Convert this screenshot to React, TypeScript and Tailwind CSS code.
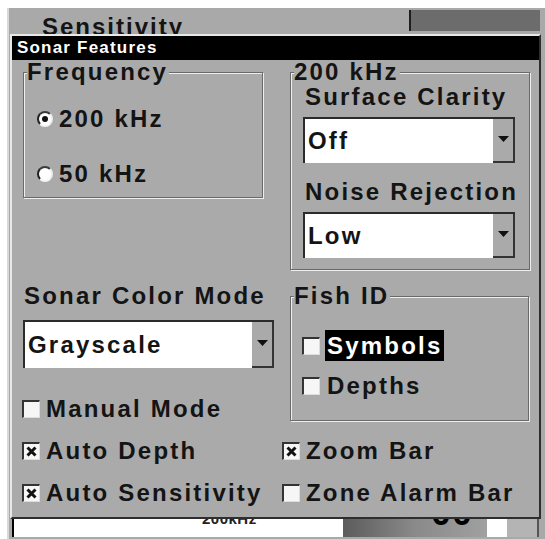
import React from "react";

const TXT = "text-[24px] leading-[24px] font-bold tracking-[2.2px] text-[#141414] whitespace-nowrap";

function GroupLabel({ children }: { children: React.ReactNode }) {
  return (
    <div className={`-mt-[13px] ml-[3px] w-fit bg-[#aaaaaa] pr-[1px] ${TXT}`}>{children}</div>
  );
}

function Dropdown({ value, cls }: { value: string; cls: string }) {
  return (
    <div className={`flex border-t-2 border-l-2 border-[#2b2b2b] ${cls}`}>
      <div className={`flex-1 bg-white flex items-center pl-[3px] ${TXT}`}>{value}</div>
      <div className="w-[22px] bg-[#aaaaaa] border-r-2 border-b-2 border-[#333] flex items-center justify-center pb-[3px]">
        <svg width="11" height="6" viewBox="0 0 11 6">
          <path d="M0 0H11L5.5 6Z" fill="#111" />
        </svg>
      </div>
    </div>
  );
}

function Radio({ on }: { on?: boolean }) {
  return (
    <div className="w-[16px] h-[16px] rounded-full bg-white border-2 border-t-[#3a3a3a] border-l-[#222] border-r-[#eeeeee] border-b-[#f4f4f4] flex items-center justify-center shrink-0">
      {on ? <div className="w-[6px] h-[6px] rounded-full bg-[#111]" /> : null}
    </div>
  );
}

function Check({ on }: { on?: boolean }) {
  return (
    <div className="w-[18px] h-[18px] bg-[#f6f6f6] border-t-2 border-l-2 border-t-[#333] border-l-[#333] border-r border-b border-r-[#dddddd] border-b-[#dddddd] flex items-center justify-center shrink-0">
      {on ? (
        <svg width="13" height="13" viewBox="0 0 13 13">
          <path d="M2.5 2.5L10.5 10.5M10.5 2.5L2.5 10.5" stroke="#111" strokeWidth="3" />
        </svg>
      ) : null}
    </div>
  );
}

function CheckRow({ label, on, cls }: { label: string; on?: boolean; cls: string }) {
  return (
    <div className={`flex items-center ${cls}`}>
      <Check on={on} />
      <span className={`ml-[6px] ${TXT}`}>{label}</span>
    </div>
  );
}

const BOX =
  "border border-[#6a6a6a] shadow-[inset_1px_1px_0_#eeeeee,1px_1px_0_#eeeeee]";

export default function App() {
  return (
    <div className="w-[545px] h-[539px] bg-white overflow-hidden font-['Liberation_Sans',Arial,sans-serif]">
      <div className="ml-[7px] mt-[8px] w-[538px] h-[531px] bg-[#a9a9a9] border-l-2 border-[#d8d8d8] flex flex-col">
        {/* top bar behind dialog */}
        <div className="h-[26px] flex overflow-hidden shrink-0">
          <div className={`w-[400px] pl-[33px] pt-[7px] ${TXT} tracking-[2px]`}>Sensitivity</div>
          <div className="mt-[2px] h-[21px] w-[131px] bg-[#6c6c6c] border-l-2 border-[#1e1e1e]" />
        </div>

        {/* dialog */}
        <div className="ml-[1px] w-[531px] h-[485px] shrink-0 bg-[#aaaaaa] border-t-2 border-l-2 border-t-[#e8e8e8] border-l-[#e8e8e8] border-r-2 border-b-2 border-r-[#2e2e2e] border-b-[#2e2e2e] flex flex-col">
          <div className="h-[24px] bg-black pl-[5px] text-white text-[17px] leading-[24px] font-bold tracking-[1.2px]">
            Sonar Features
          </div>

          <div className="pl-[11px] pt-[12px]">
            <div className="flex">
              {/* left column */}
              <div className="w-[251px] flex flex-col">
                <div className={`w-[240px] ${BOX} pb-[11px]`}>
                  <GroupLabel>Frequency</GroupLabel>
                  <div className="pl-[13px]">
                    <div className="mt-[23px] flex items-center">
                      <Radio on />
                      <span className={`ml-[6px] ${TXT}`}>200 kHz</span>
                    </div>
                    <div className="mt-[31px] flex items-center">
                      <Radio />
                      <span className={`ml-[6px] ${TXT}`}>50 kHz</span>
                    </div>
                  </div>
                </div>

                <div className={`mt-[86px] ml-[1px] ${TXT}`}>Sonar Color Mode</div>
                <Dropdown value="Grayscale" cls="mt-[12px] w-[251px] h-[48px]" />
                <CheckRow label="Manual Mode" cls="mt-[29px] -ml-[1px]" />
              </div>

              {/* right column */}
              <div className="ml-[16px] w-[240px] flex flex-col">
                <div className={`w-[240px] ${BOX} pb-[11px]`}>
                  <GroupLabel>200 kHz</GroupLabel>
                  <div className="pl-[12px]">
                    <div className={`mt-[1px] ml-[2px] ${TXT}`}>Surface Clarity</div>
                    <Dropdown value="Off" cls="mt-[8px] w-[212px] h-[46px]" />
                    <div className={`mt-[17px] ml-[2px] ${TXT}`}>Noise Rejection</div>
                    <Dropdown value="Low" cls="mt-[8px] w-[212px] h-[46px]" />
                  </div>
                </div>

                <div className={`mt-[26px] w-[239px] ${BOX} pb-[19px]`}>
                  <GroupLabel>Fish ID</GroupLabel>
                  <div className="pl-[11px]">
                    <div className="mt-[22px] flex items-center">
                      <Check />
                      <span className="ml-[5px] px-[2px] bg-black text-white text-[24px] leading-[31px] font-bold tracking-[2.2px] whitespace-nowrap">
                        Symbols
                      </span>
                    </div>
                    <div className="mt-[9px] flex items-center h-[31px]">
                      <Check />
                      <span className={`ml-[5px] px-[2px] ${TXT}`}>Depths</span>
                    </div>
                  </div>
                </div>
              </div>
            </div>

            <div className="grid grid-cols-[260px_1fr] -ml-[1px] mt-[18px] gap-y-[18px]">
              <CheckRow label="Auto Depth" on cls="" />
              <CheckRow label="Zoom Bar" on cls="" />
              <CheckRow label="Auto Sensitivity" on cls="" />
              <CheckRow label="Zone Alarm Bar" cls="" />
            </div>
          </div>
        </div>

        {/* strip below dialog */}
        <div className="h-[18px] flex shrink-0 overflow-hidden">
          <div className="ml-[3px] w-[2px] bg-black" />
          <div className="w-[329px] bg-white overflow-hidden">
            <div className="ml-[188px] -mt-[9px] text-[15px] leading-[18px] font-bold tracking-[0.5px] text-[#222]">200kHz</div>
          </div>
          <div className="w-[144px] bg-gradient-to-r from-[#5c5c5c] via-[#8a8a8a] to-[#a0a0a0] overflow-hidden">
            <div className="ml-[88px] -mt-[24px] text-[36px] leading-[36px] font-bold tracking-[1px] text-black">00</div>
          </div>
          <div className="w-[20px] bg-white" />
          <div className="w-[30px] bg-[#b4b4b4]" />
          <div className="w-[2px] bg-[#555]" />
        </div>
      </div>
    </div>
  );
}
